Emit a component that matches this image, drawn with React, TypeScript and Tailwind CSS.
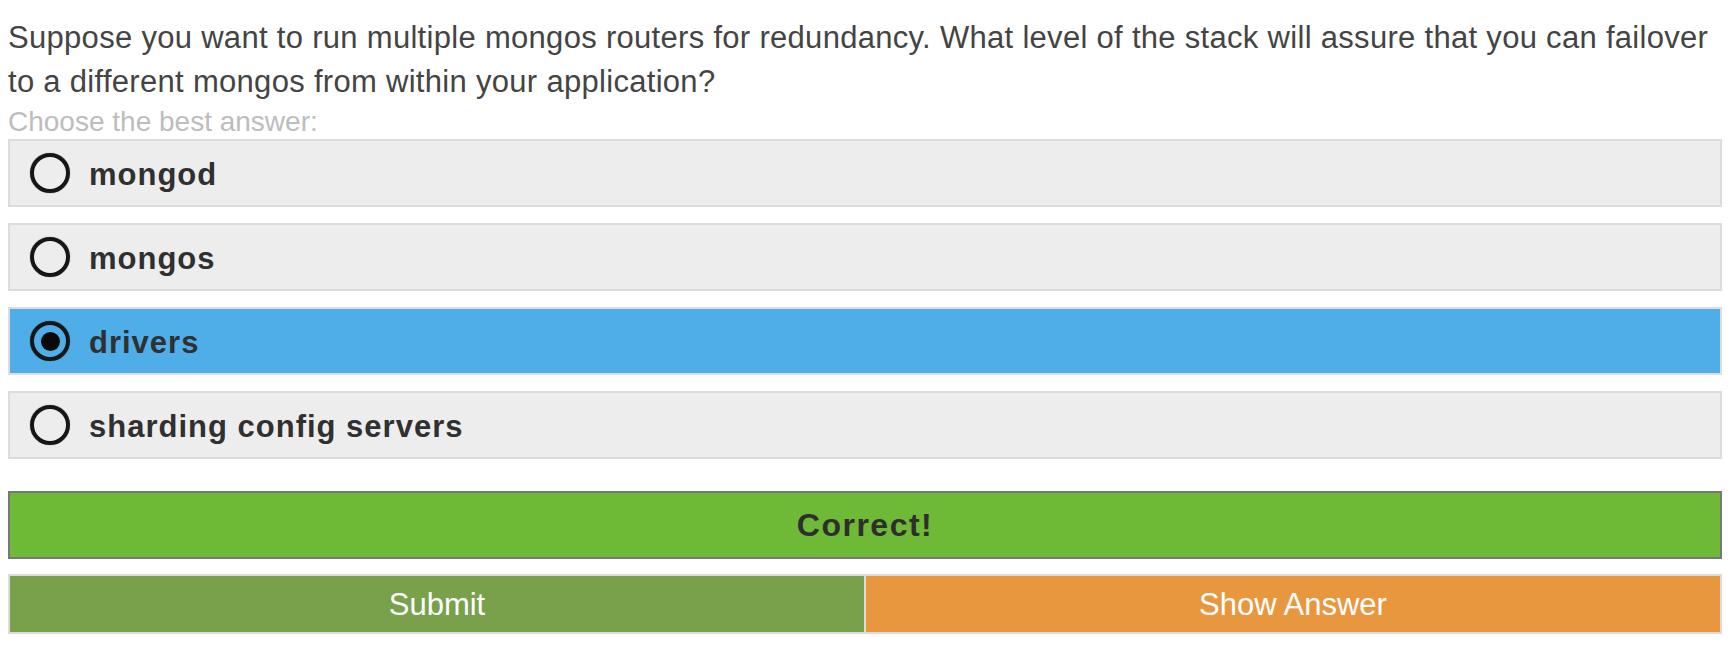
import React from "react";

const options = [
  { label: "mongod", selected: false },
  { label: "mongos", selected: false },
  { label: "drivers", selected: true },
  { label: "sharding config servers", selected: false },
];

function Radio({ selected }: { selected: boolean }) {
  return (
    <div className="w-[40px] h-[40px] shrink-0 rounded-full border-[4px] border-[#161616] flex items-center justify-center shadow-[0_0_1px_rgba(0,0,0,0.6)]">
      {selected && <div className="w-[19px] h-[19px] rounded-full bg-[#0a0a0a]" />}
    </div>
  );
}

export default function App() {
  return (
    <div className="w-[1734px] h-[654px] bg-white pl-[8px] pr-[12px] pt-[16px] font-['Liberation_Sans',Arial,sans-serif]">
      <p className="text-[31px] leading-[44px] tracking-[0.3px] text-[#444]">
        Suppose you want to run multiple mongos routers for redundancy. What level of the stack will assure that you can failover to a different mongos from within your application?
      </p>
      <p className="text-[28px] leading-[35px] text-[#bdbdbd]">Choose the best answer:</p>
      <div className="flex flex-col gap-[16px]">
        {options.map((o) => (
          <div
            key={o.label}
            className={
              "h-[68px] border-2 border-[#dcdcdc] flex items-center pl-[20px] " +
              (o.selected ? "bg-[#4faee7]" : "bg-[#ededed]")
            }
          >
            <Radio selected={o.selected} />
            <span className="ml-[19px] mt-[3px] text-[31px] leading-none font-bold tracking-[1px] text-[#303030]">
              {o.label}
            </span>
          </div>
        ))}
      </div>
      <div className="mt-[32px] h-[68px] border-2 border-[#777777] bg-[#6eb936] flex items-center justify-center">
        <span className="text-[32px] leading-none font-bold tracking-[1.5px] text-[#2e2e2e]">Correct!</span>
      </div>
      <div className="mt-[15px] h-[60px] border-2 border-[#dcdcdc] flex">
        <button className="flex-1 bg-[#79a04a] text-white text-[31px] leading-none flex items-center justify-center">
          Submit
        </button>
        <button className="flex-1 bg-[#e9973f] border-l-2 border-[#dcdcdc] text-white text-[31px] leading-none flex items-center justify-center">
          Show Answer
        </button>
      </div>
    </div>
  );
}
